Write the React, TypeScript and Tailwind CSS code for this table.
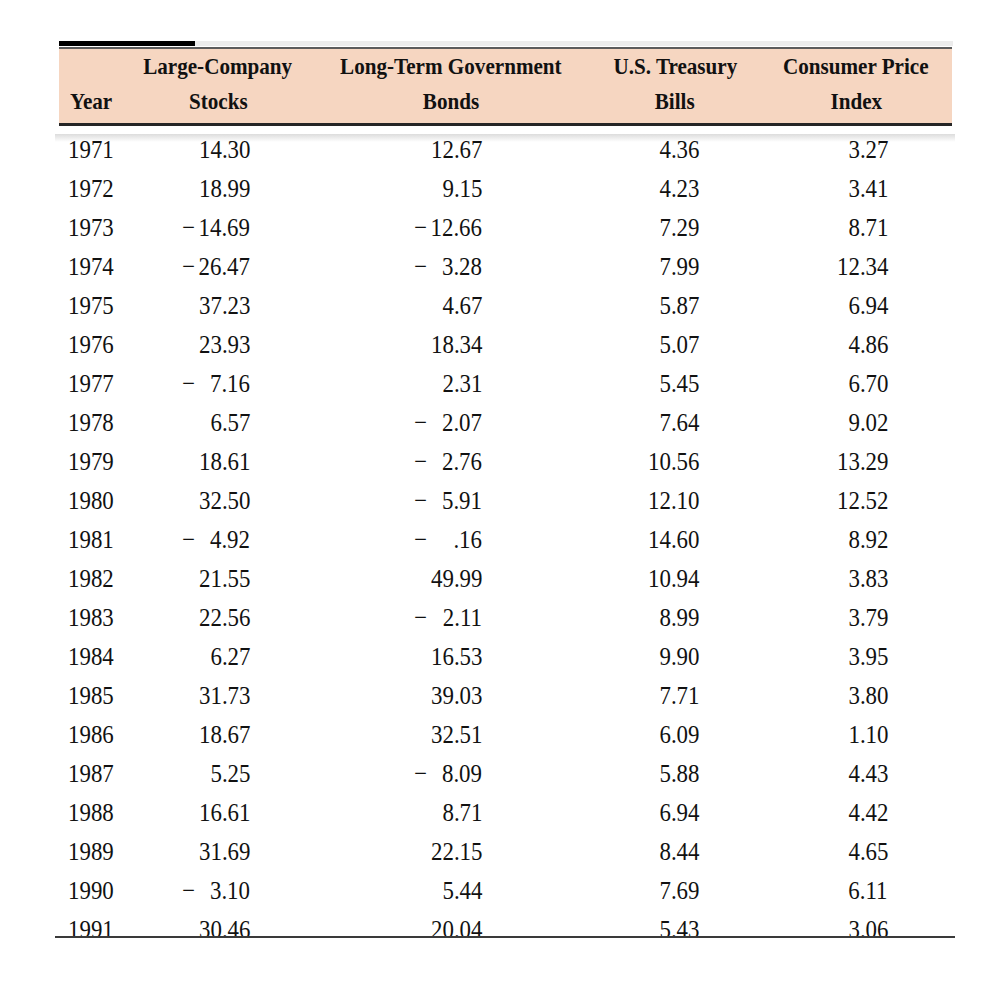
import React from "react";

type Row = [string, string, string, string, string];

const rows: Row[] = [
  ["1971", "14.30", "12.67", "4.36", "3.27"],
  ["1972", "18.99", "9.15", "4.23", "3.41"],
  ["1973", "-14.69", "-12.66", "7.29", "8.71"],
  ["1974", "-26.47", "-3.28", "7.99", "12.34"],
  ["1975", "37.23", "4.67", "5.87", "6.94"],
  ["1976", "23.93", "18.34", "5.07", "4.86"],
  ["1977", "-7.16", "2.31", "5.45", "6.70"],
  ["1978", "6.57", "-2.07", "7.64", "9.02"],
  ["1979", "18.61", "-2.76", "10.56", "13.29"],
  ["1980", "32.50", "-5.91", "12.10", "12.52"],
  ["1981", "-4.92", "-.16", "14.60", "8.92"],
  ["1982", "21.55", "49.99", "10.94", "3.83"],
  ["1983", "22.56", "-2.11", "8.99", "3.79"],
  ["1984", "6.27", "16.53", "9.90", "3.95"],
  ["1985", "31.73", "39.03", "7.71", "3.80"],
  ["1986", "18.67", "32.51", "6.09", "1.10"],
  ["1987", "5.25", "-8.09", "5.88", "4.43"],
  ["1988", "16.61", "8.71", "6.94", "4.42"],
  ["1989", "31.69", "22.15", "8.44", "4.65"],
  ["1990", "-3.10", "5.44", "7.69", "6.11"],
  ["1991", "30.46", "20.04", "5.43", "3.06"],
];

function Num({ v }: { v: string }) {
  if (v.startsWith("-")) {
    return (
      <div className="flex w-[77px] origin-right scale-x-[0.88] justify-between">
        <span>−</span>
        <span>{v.slice(1)}</span>
      </div>
    );
  }
  return <span className="origin-right scale-x-[0.88]">{v}</span>;
}

const grid = "grid grid-cols-[77px_164px_302px_146px_204px]";

export default function App() {
  return (
    <div className="min-h-[986px] w-[987px] bg-white pt-[41px] font-['Liberation_Serif',serif] text-[#111111]">
      <div className="ml-[59px] flex h-[5px] w-[894px]">
        <div className="w-[136px] bg-black" />
        <div className="flex-1 bg-[#ececec]" />
      </div>
      <div className="ml-[59px] mt-[1px] h-[2px] w-[893px] bg-[#5c5c5c]" />
      <div className={`${grid} ml-[59px] h-[74px] w-[893px] bg-[#f6d6c1] text-[24px] font-bold leading-[35px]`}>
        <div className="flex flex-col items-start justify-end pb-[4px] pl-[11px]">
          <span className="origin-left scale-x-[0.88]">Year</span>
        </div>
        <div className="flex flex-col items-center">
          <span className="scale-x-[0.88] whitespace-nowrap">Large-Company</span>
          <span className="scale-x-[0.88]">Stocks</span>
        </div>
        <div className="flex flex-col items-center">
          <span className="scale-x-[0.88] whitespace-nowrap">Long-Term Government</span>
          <span className="scale-x-[0.88]">Bonds</span>
        </div>
        <div className="flex flex-col items-center">
          <span className="scale-x-[0.88] whitespace-nowrap">U.S. Treasury</span>
          <span className="scale-x-[0.88]">Bills</span>
        </div>
        <div className="flex flex-col items-center pl-[12px]">
          <span className="scale-x-[0.88] whitespace-nowrap">Consumer Price</span>
          <span className="scale-x-[0.88]">Index</span>
        </div>
      </div>
      <div className="ml-[59px] h-[3px] w-[893px] bg-[#262626]" />
      <div className="relative ml-[55px] h-[812px] w-[900px] overflow-hidden border-b-2 border-[#3a3a3a]">
        <div className="absolute left-0 right-0 top-[8px] h-[8px] bg-gradient-to-b from-[#dcdcdc] to-white" />
        <div className="relative pl-[4px] pt-[4px] text-[26px] leading-[39px]">
          {rows.map((r) => (
            <div key={r[0]} className={`${grid} w-[893px]`}>
              <div className="flex pl-[9px]">
                <span className="origin-left scale-x-[0.88]">{r[0]}</span>
              </div>
              <div className="flex justify-end pr-[50px]">
                <Num v={r[1]} />
              </div>
              <div className="flex justify-end pr-[120px]">
                <Num v={r[2]} />
              </div>
              <div className="flex justify-end pr-[49px]">
                <Num v={r[3]} />
              </div>
              <div className="flex justify-end pr-[64px]">
                <Num v={r[4]} />
              </div>
            </div>
          ))}
        </div>
      </div>
    </div>
  );
}
